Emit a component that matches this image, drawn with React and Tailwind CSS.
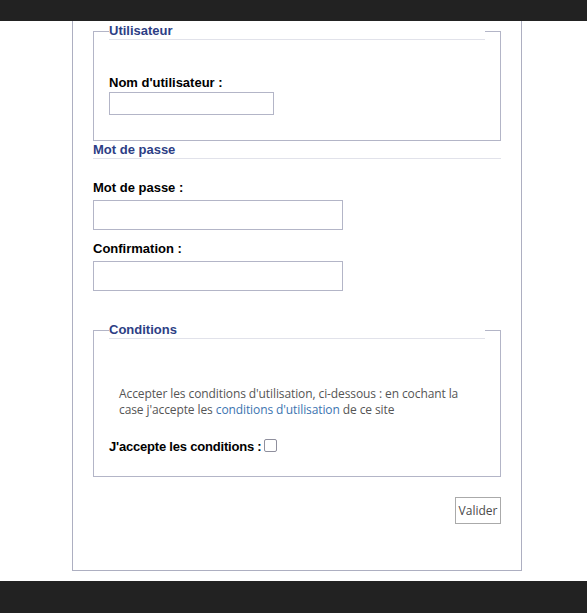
import React from 'react';

function Field({ label, inputClass }) {
    return (
        <div className="flex flex-col">
            <label className="text-[13px] leading-[16px] font-bold text-black">{label}</label>
            <input type="text" className={`border border-[#b3b5c7] bg-white ${inputClass}`} />
        </div>
    );
}

export default function App() {
    return (
        <div className="min-h-[613px] bg-white flex flex-col font-['Liberation_Sans',Arial,sans-serif]">
            <div className="h-[21px] bg-[#222222]" />

            <div className="flex-1 flex flex-col">
                {/* main form panel, its top runs above the viewport */}
                <div className="ml-[72px] w-[450px] border-x border-b border-[#adafc1] px-[20px] pt-[2px] pb-[46px]">
                    <fieldset className="border border-[#b3b5c7] px-[15px] pb-[25px]">
                        <legend className="w-full border-b border-[#e1e2ea] text-[13px] leading-[16px] font-bold text-[#2d3e85]">
                            Utilisateur
                        </legend>
                        <div className="mt-[35px]">
                            <Field label="Nom d'utilisateur :" inputClass="w-[165px] h-[23px] mt-[1px]" />
                        </div>
                    </fieldset>

                    <h3 className="mt-[1px] border-b border-[#e1e2ea] text-[13px] leading-[16px] font-bold text-[#2d3e85]">
                        Mot de passe
                    </h3>

                    <div className="mt-[21px] flex flex-col gap-[11px]">
                        <Field label="Mot de passe :" inputClass="w-[250px] h-[30px] mt-[4px]" />
                        <Field label="Confirmation :" inputClass="w-[250px] h-[30px] mt-[4px]" />
                    </div>

                    <fieldset className="mt-[31px] border border-[#b3b5c7] px-[15px] pb-[21px]">
                        <legend className="w-full border-b border-[#e1e2ea] text-[13px] leading-[16px] font-bold text-[#2d3e85]">
                            Conditions
                        </legend>
                        <p className="mt-[47px] pl-[10px] text-[12px] leading-[16px] tracking-[-0.1px] text-[#555555] font-['Open_Sans',sans-serif]">
                            Accepter les conditions d'utilisation, ci-dessous : en cochant la case j'accepte les{' '}
                            <a className="text-[#3b74b0]">conditions d'utilisation</a> de ce site
                        </p>
                        <div className="mt-[21px] flex items-center gap-[2px]">
                            <label className="text-[13px] leading-[16px] font-bold tracking-[-0.2px] text-black">J'accepte les conditions :</label>
                            <input type="checkbox" className="w-[13px] h-[13px] -mt-[3px] appearance-none rounded-[2px] border border-[#8f8f9d] bg-white" />
                        </div>
                    </fieldset>

                    <div className="mt-[20px] flex justify-end">
                        <button className="w-[46px] h-[27px] border border-[#aaaaaa] bg-white text-[12px] text-[#4a4a4a] font-['Open_Sans',sans-serif]">
                            Valider
                        </button>
                    </div>
                </div>
            </div>

            <div className="h-[32px] bg-[#222222]" />
        </div>
    );
}
